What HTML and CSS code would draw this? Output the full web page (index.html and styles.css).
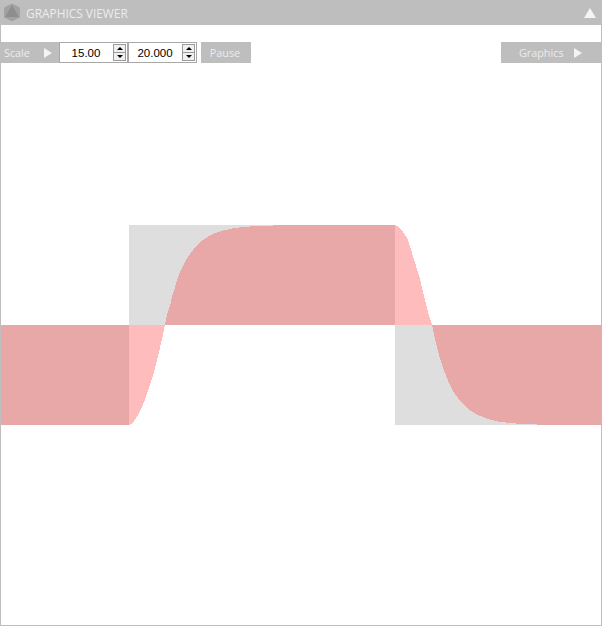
FILE: index.html
```html
<!DOCTYPE html>
<html lang="en">
<head>
  <meta charset="UTF-8">
  <title>Graphics Viewer</title>
  <link rel="stylesheet" href="styles.css">
</head>
<body>

<div class="viewer">
  <!-- title bar -->
  <div class="title-bar">
    <svg class="logo" width="18" height="19" viewBox="0 0 18 19">
      <polygon points="9,0.5 17,4.5 17,14.5 9,18.5 1,14.5 1,4.5" fill="#a2a2a2"/>
      <polygon points="9,2 16,14 2,14" fill="#8e8e8e"/>
    </svg>
    <span class="title-text">GRAPHICS VIEWER</span>
    <span class="collapse"></span>
  </div>

  <!-- toolbar -->
  <div class="toolbar">
    <div class="tool-btn scale-btn">Scale<span class="arrow"></span></div>
    <div class="spinner">
      <input class="spin-value" type="text" value="15.00">
      <div class="spin-buttons">
        <div class="spin-btn"><span class="up"></span></div>
        <div class="spin-btn"><span class="down"></span></div>
      </div>
    </div>
    <div class="spinner">
      <input class="spin-value" type="text" value="20.000">
      <div class="spin-buttons">
        <div class="spin-btn"><span class="up"></span></div>
        <div class="spin-btn"><span class="down"></span></div>
      </div>
    </div>
    <div class="tool-btn pause-btn">Pause</div>
    <div class="tool-btn graphics-btn">Graphics<span class="arrow"></span></div>
  </div>

  <!-- plot: input square wave against the filtered response -->
  <svg class="plot" width="600" height="562" viewBox="1 63 600 562" shape-rendering="crispEdges">
    <rect class="input" x="129" y="225" width="266" height="100"/>
    <rect class="input" x="395" y="325" width="207" height="100"/>

    <polygon class="response" points="129,325 129,425 131,424 134,421 138,415 142,407 146,397 150,385 154,372 158,356 162,339 165,325"/>
    <polygon class="response" points="395,225 397,226 400,228 403,232 407,238 410,246 412,253 415,262 417,270 420,278 422,288 425,300 428,312 432,325 395,325"/>

    <rect class="overlap" x="0" y="325" width="129" height="100"/>
    <polygon class="overlap" points="165,325 167,315 170,306 172,297 175,287 177,280 180,272 183,266 186,260 190,254 193,250 198,244 203,240 209,236 215,233 223,230.5 233,228.3 245,226.8 260,225.9 280,225.3 395,225 395,325"/>
    <polygon class="overlap" points="432,325 435,339 438,351 441,362 445,373 449,383 453,391 458,398 463,404 470,410.5 478,415 488,419 498,421.5 512,423.3 532,424.4 562,425 602,425 602,325"/>
  </svg>
</div>

</body>
</html>
```

FILE: styles.css
```css
html, body {
  margin: 0;
  padding: 0;
  background: #fff;
}

.viewer {
  width: 602px;
  height: 626px;
  box-sizing: border-box;
  border: 1px solid #bebebe;
  border-top: none;
  font-family: "Open Sans", "Liberation Sans", sans-serif;
  display: flex;
  flex-direction: column;
  overflow: hidden;
}

/* title bar */
.title-bar {
  height: 25px;
  margin: 0 -1px;
  flex: none;
  background: #bebebe;
  color: #ececec;
  display: flex;
  align-items: center;
  padding: 0 6px 0 3px;
  font-size: 11.9px;
}
.logo {
  flex: none;
}
.title-text {
  margin-left: 5px;
}
.collapse {
  margin-left: auto;
  width: 0;
  height: 0;
  border-left: 6px solid transparent;
  border-right: 6px solid transparent;
  border-bottom: 10px solid #f4f4f4;
}

/* toolbar */
.toolbar {
  display: flex;
  height: 21px;
  margin: 17px 0 0 -1px;
  flex: none;
}
.tool-btn {
  background: #bebebe;
  color: #ececec;
  font-size: 10.8px;
  display: flex;
  align-items: center;
}
.arrow {
  width: 0;
  height: 0;
  border-top: 5px solid transparent;
  border-bottom: 5px solid transparent;
  border-left: 8px solid #f4f4f4;
}
.scale-btn {
  width: 59px;
  box-sizing: border-box;
  padding-left: 4px;
}
.scale-btn .arrow {
  margin-left: 14px;
}
.pause-btn {
  width: 50px;
  box-sizing: border-box;
  margin-left: 4px;
  padding-right: 2px;
  justify-content: center;
}
.graphics-btn {
  width: 100px;
  margin-left: auto;
  box-sizing: border-box;
  padding-left: 18px;
}
.graphics-btn .arrow {
  margin-left: 10px;
}

/* number boxes */
.spinner {
  width: 69px;
  box-sizing: border-box;
  border: 1px solid #a8a8a8;
  background: #fff;
  display: flex;
  align-items: center;
}
.spin-value {
  width: 52px;
  height: 17px;
  margin-right: 1px;
  padding: 0;
  border: none;
  outline: none;
  background: transparent;
  text-align: center;
  font-family: "Liberation Sans", sans-serif;
  font-size: 11.5px;
  color: #000;
}
.spin-buttons {
  width: 13px;
  height: 17px;
  display: flex;
  flex-direction: column;
}
.spin-btn {
  flex: 1;
  background: #f0f0f0;
  border: 1px solid #9a9a9a;
  margin-top: -1px;
  display: flex;
  align-items: center;
  justify-content: center;
}
.spin-btn:first-child {
  margin-top: 0;
}
.up {
  border-left: 3px solid transparent;
  border-right: 3px solid transparent;
  border-bottom: 3px solid #000;
}
.down {
  border-left: 3px solid transparent;
  border-right: 3px solid transparent;
  border-top: 3px solid #000;
}

/* plot */
.plot {
  display: block;
  flex: none;
  overflow: visible;
}
.input {
  fill: #dedede;
}
.response {
  fill: #ffbcbc;
}
.overlap {
  fill: #e8a8a8;
}
```
